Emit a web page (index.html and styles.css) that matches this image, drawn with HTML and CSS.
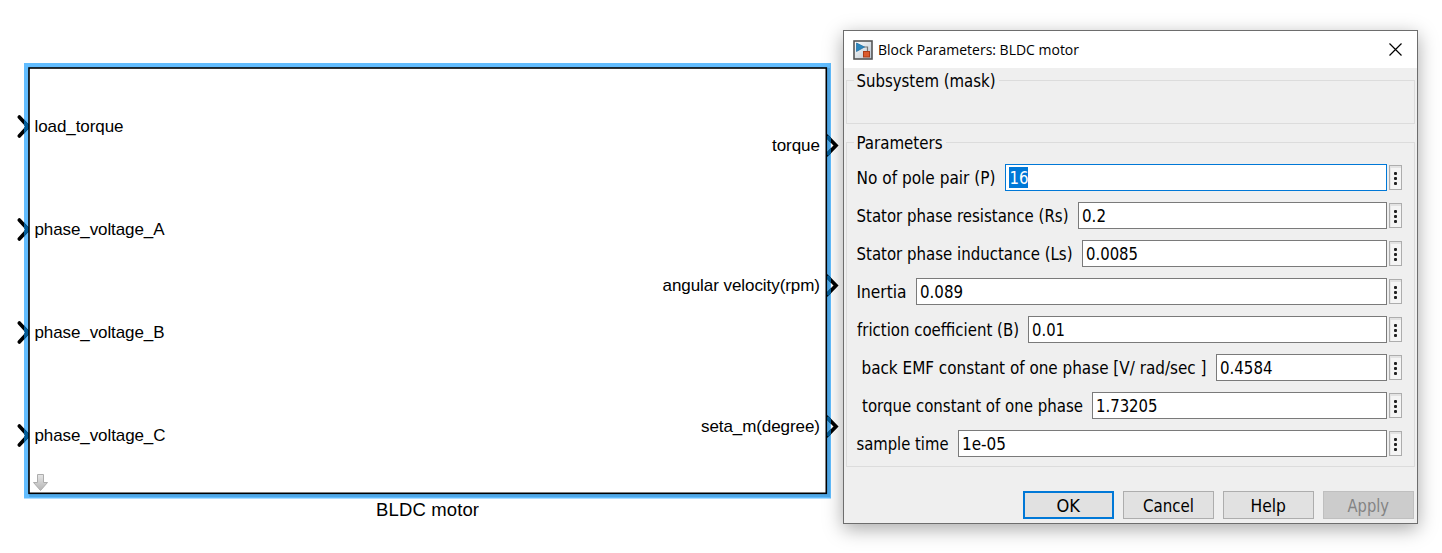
FILE: index.html
```
<!DOCTYPE html>
<html lang="en">
<head>
<meta charset="utf-8">
<title>Block Parameters: BLDC motor</title>
<link rel="stylesheet" href="styles.css">
</head>
<body>
<svg class="canvas" width="1442" height="553">
  <defs>
    <linearGradient id="arrow" x1="0" y1="0" x2="0" y2="1"><stop offset="0" stop-color="#e6e6e6"/><stop offset="1" stop-color="#b4b4b4"/></linearGradient>
    <clipPath id="selection"><path d="M24 63H29V499H24zM827 63H831V499H827z"/></clipPath>
    <path id="in" d="M19.3 -9.5L28 0L19.3 9.5"/>
    <path id="out" d="M827 -9.3L836 0L827 9.3"/>
    <g id="ports">
      <use href="#in" y="126.5"/><use href="#in" y="229.5"/><use href="#in" y="332.5"/><use href="#in" y="435.5"/>
      <use href="#out" y="145.5"/><use href="#out" y="285.5"/><use href="#out" y="426.5"/>
    </g>
  </defs>
  <rect class="halo" x="24" y="63" width="807" height="435.5"/>
  <path class="halo-shade" d="M827 68H830V497H29V494H827z"/>
  <use href="#ports" class="port"/>
  <use href="#ports" class="port-selected" clip-path="url(#selection)"/>
  <rect class="block" x="29" y="68" width="797.3" height="425.3"/>
  <g class="port-name">
    <text x="34.5" y="132" textLength="89">load_torque</text>
    <text x="34.5" y="235" textLength="130">phase_voltage_A</text>
    <text x="34.5" y="338" textLength="130">phase_voltage_B</text>
    <text x="34.5" y="441" textLength="131">phase_voltage_C</text>
    <text x="772" y="151" textLength="48">torque</text>
    <text x="662.5" y="291" textLength="157.5">angular velocity(rpm)</text>
    <text x="701" y="432" textLength="119">seta_m(degree)</text>
  </g>
  <text class="block-name" x="376" y="516" textLength="103">BLDC motor</text>
  <path d="M37.5 474.5H43.5V482.5H47.5L40.5 490.5L33.5 482.5H37.5z" fill="url(#arrow)" stroke="#adadad"/>
</svg>

<main class="dialog">
  <header class="titlebar">
    <svg class="app-icon" width="20" height="20">
      <defs><linearGradient id="tile" x2="1" y2="1"><stop stop-color="#fff"/><stop offset="1" stop-color="#b9c5d0"/></linearGradient></defs>
      <rect x="1" y="1" width="18" height="18" fill="url(#tile)" stroke="#555" stroke-width="1.6"/>
      <path d="M11 7H14.5V12" fill="none" stroke="#777" stroke-width="1.2"/>
      <path d="M3.5 3V11.5L11.5 7z" fill="#2d87bd" stroke="#1769a0" stroke-width=".7"/>
      <rect x="10.5" y="11.5" width="6" height="5.5" fill="#db5a2c" stroke="#a93c19"/>
    </svg>
    <svg class="title" width="220" height="24"><text x="0" y="17" textLength="201" lengthAdjust="spacingAndGlyphs">Block Parameters: BLDC motor</text></svg>
    <svg class="close" width="13" height="13"><path d="M.5 .5L12.5 12.5M12.5 .5L.5 12.5"/></svg>
  </header>

  <section class="group mask">
    <svg class="legend" width="145" height="24"><text x="2.5" y="18" textLength="139" lengthAdjust="spacingAndGlyphs">Subsystem (mask)</text></svg>
  </section>

  <section class="group params">
    <svg class="legend" width="92" height="24"><text x="2.5" y="18" textLength="86" lengthAdjust="spacingAndGlyphs">Parameters</text></svg>
    <div class="row"><svg width="148" height="27"><text x="-.5" y="20" textLength="139" lengthAdjust="spacingAndGlyphs">No of pole pair (P)</text></svg>
      <div class="field focus"><svg width="60" height="25"><rect x="3" y="2" width="19" height="21"/><text x="3.5" y="19" textLength="19" lengthAdjust="spacingAndGlyphs">16</text></svg></div><div class="more"><i></i><i></i><i></i></div></div>
    <div class="row"><svg width="221" height="27"><text x="-.5" y="20" textLength="212" lengthAdjust="spacingAndGlyphs">Stator phase resistance (Rs)</text></svg>
      <div class="field"><svg width="60" height="25"><text x="3" y="19" textLength="24" lengthAdjust="spacingAndGlyphs">0.2</text></svg></div><div class="more"><i></i><i></i><i></i></div></div>
    <div class="row"><svg width="225" height="27"><text x="-.5" y="20" textLength="216" lengthAdjust="spacingAndGlyphs">Stator phase inductance (Ls)</text></svg>
      <div class="field"><svg width="70" height="25"><text x="3" y="19" textLength="52" lengthAdjust="spacingAndGlyphs">0.0085</text></svg></div><div class="more"><i></i><i></i><i></i></div></div>
    <div class="row"><svg width="59" height="27"><text x="-.5" y="20" textLength="50" lengthAdjust="spacingAndGlyphs">Inertia</text></svg>
      <div class="field"><svg width="60" height="25"><text x="3" y="19" textLength="43" lengthAdjust="spacingAndGlyphs">0.089</text></svg></div><div class="more"><i></i><i></i><i></i></div></div>
    <div class="row"><svg width="171" height="27"><text x="0" y="20" textLength="162" lengthAdjust="spacingAndGlyphs">friction coefficient (B)</text></svg>
      <div class="field"><svg width="60" height="25"><text x="3" y="19" textLength="33" lengthAdjust="spacingAndGlyphs">0.01</text></svg></div><div class="more"><i></i><i></i><i></i></div></div>
    <div class="row"><svg width="359" height="27"><text x="4.5" y="20" textLength="345" lengthAdjust="spacingAndGlyphs">back EMF constant of one phase [V/ rad/sec ]</text></svg>
      <div class="field"><svg width="70" height="25"><text x="3" y="19" textLength="52.5" lengthAdjust="spacingAndGlyphs">0.4584</text></svg></div><div class="more"><i></i><i></i><i></i></div></div>
    <div class="row"><svg width="235" height="27"><text x="5" y="20" textLength="221" lengthAdjust="spacingAndGlyphs">torque constant of one phase</text></svg>
      <div class="field"><svg width="80" height="25"><text x="3" y="19" textLength="61.5" lengthAdjust="spacingAndGlyphs">1.73205</text></svg></div><div class="more"><i></i><i></i><i></i></div></div>
    <div class="row"><svg width="101" height="27"><text x="-.5" y="20" textLength="92" lengthAdjust="spacingAndGlyphs">sample time</text></svg>
      <div class="field"><svg width="60" height="25"><text x="3" y="19" textLength="44" lengthAdjust="spacingAndGlyphs">1e-05</text></svg></div><div class="more"><i></i><i></i><i></i></div></div>
  </section>

  <footer class="actions">
    <div class="button primary"><svg width="91" height="28"><text x="33.5" y="21" textLength="23.5" lengthAdjust="spacingAndGlyphs">OK</text></svg></div>
    <div class="button"><svg width="91" height="28"><text x="20" y="21" textLength="51" lengthAdjust="spacingAndGlyphs">Cancel</text></svg></div>
    <div class="button"><svg width="91" height="28"><text x="27.5" y="21" textLength="35.5" lengthAdjust="spacingAndGlyphs">Help</text></svg></div>
    <div class="button disabled"><svg width="91" height="28"><text x="24.5" y="21" textLength="41.5" lengthAdjust="spacingAndGlyphs">Apply</text></svg></div>
  </footer>
</main>
</body>
</html>
```
FILE: styles.css
```
* { box-sizing: border-box; }
body { margin: 0; width: 1442px; height: 553px; position: relative; overflow: hidden; background: #fff; }
svg { display: block; flex: none; overflow: visible; }

.canvas { font-family: "Liberation Sans", Arial, sans-serif; }
.halo { fill: #62bdff; }
.halo-shade { fill: #4fa8e8; }
.block { fill: #fff; stroke: #000; stroke-width: 1.6; }
.port { fill: none; stroke: #000; stroke-width: 3.7; stroke-linecap: round; }
.port-selected { fill: none; stroke: #005c99; stroke-width: 3.7; }
.port-name { font-size: 17px; }
.block-name { font-size: 18.5px; }

.dialog {
  position: absolute; left: 843px; top: 30px; width: 575px; height: 494px;
  display: flex; flex-direction: column;
  border: 1px solid #6d6d6d; background: #efefef;
  box-shadow: 0 5px 18px rgba(0, 0, 0, .34);
  font-family: "DejaVu Sans Condensed", "DejaVu Sans", sans-serif; font-size: 17.3px;
}
.titlebar { height: 37px; flex: none; display: flex; align-items: center; padding: 0 15px 0 9px; background: #fff; }
.title { margin-left: 5px; font-family: "Open Sans", "Noto Sans", sans-serif; font-size: 15px; }
.close { margin-left: auto; fill: none; stroke: #000; stroke-width: 1.2; }

.group { flex: none; margin: 0 2px; border: 1px solid #dcdcdc; }
.legend { margin-left: 7px; background: #efefef; }
.mask { height: 44px; margin-top: 12px; }
.mask .legend { margin-top: -12px; }
.params { height: 325px; margin-top: 18px; }
.params .legend { margin-top: -12px; margin-bottom: 9px; }
.row { display: flex; height: 27px; margin: 0 12px 11px 10px; align-items: center; }
.field { flex: 1; height: 27px; border: 1px solid #7a7a7a; background: #fff; }
.focus { border-color: #0078d7; }
.focus rect { fill: #0078d7; }
.focus text { fill: #fff; }
.more {
  width: 13px; height: 25px; margin-left: 2px; border: 1px solid #adadad; background: #f5f5f5;
  box-shadow: inset 0 2px #e3e3e3, inset 1px 0 #e8e8e8;
  display: flex; flex-direction: column; align-items: center; justify-content: center; gap: 2px; padding-top: 1px;
}
.more i { width: 3px; height: 3px; background: #222; border-radius: 1px; }

.actions { display: flex; justify-content: flex-end; gap: 9px; margin: 24px 3px 0 0; }
.button { width: 91px; height: 28px; background: #e1e1e1; box-shadow: inset 0 0 0 1px #adadad; }
.primary { box-shadow: inset 0 0 0 2px #0078d7; }
.disabled { background: #ccc; box-shadow: inset 0 0 0 1px #bfbfbf; fill: #838383; }
```
